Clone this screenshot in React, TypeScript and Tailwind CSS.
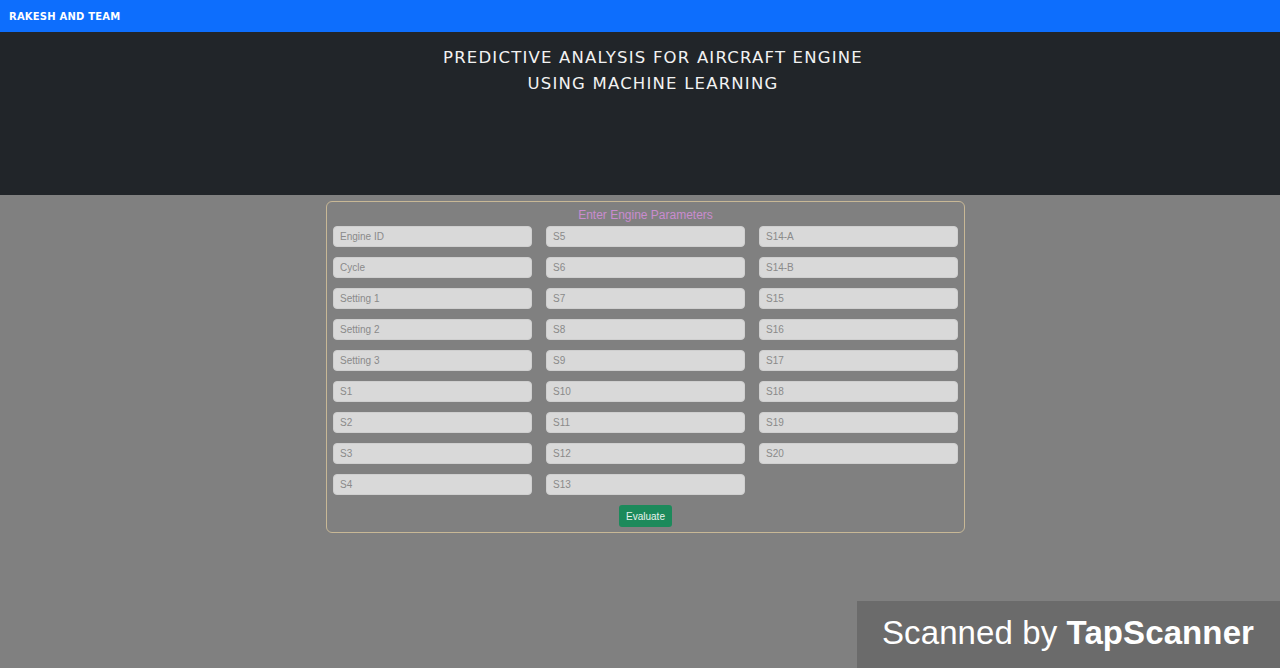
import React from "react";

const col1 = ["Engine ID", "Cycle", "Setting 1", "Setting 2", "Setting 3", "S1", "S2", "S3", "S4"];
const col2 = ["S5", "S6", "S7", "S8", "S9", "S10", "S11", "S12", "S13"];
const col3 = ["S14-A", "S14-B", "S15", "S16", "S17", "S18", "S19", "S20"];

function Field({ label }: { label: string }) {
  return (
    <input
      placeholder={label}
      className="h-[21px] w-full rounded-[4px] bg-[#d9d9d9] px-[6px] text-[10px] text-[#555] placeholder:text-[#8a8a8a] outline-none border border-[#cfcfcf]"
      style={{ fontFamily: '"Liberation Sans", Arial, sans-serif' }}
    />
  );
}

export default function App() {
  return (
    <div className="relative min-h-[668px] w-full bg-[#808080] overflow-hidden" style={{ fontFamily: '"Liberation Sans", Arial, sans-serif' }}>
      <div className="h-[32px] bg-[#0d6efd] flex items-center pl-[9px]">
        <span className="text-white text-[10px] font-bold tracking-[0.2px]" style={{ fontFamily: '"DejaVu Sans", sans-serif' }}>RAKESH AND TEAM</span>
      </div>
      <div className="h-[163px] bg-[#212529] pt-[13px] pl-[26px] text-center">
        <div className="text-[#f2f2f2] text-[16.5px] leading-[26px] tracking-[1.2px]" style={{ fontFamily: '"DejaVu Sans", sans-serif', fontWeight: 400 }}>
          <div>PREDICTIVE ANALYSIS FOR AIRCRAFT ENGINE</div>
          <div>USING MACHINE LEARNING</div>
        </div>
      </div>
      <div className="flex justify-center pt-[6px] pl-[11px]">
        <div className="w-[639px] border border-[#c8b896] rounded-[6px] px-[6px] pt-[5px] pb-[5px] flex flex-col items-center">
          <div className="text-[12px] leading-[16px] text-[#c98ccf] mb-[3px]">Enter Engine Parameters</div>
          <div className="grid grid-cols-3 gap-x-[14px] w-full">
            {[col1, col2, col3].map((col, i) => (
              <div key={i} className="flex flex-col gap-[10px]">
                {col.map((l) => (
                  <Field key={l} label={l} />
                ))}
              </div>
            ))}
          </div>
          <button className="mt-[10px] h-[22px] px-[7px] rounded-[3px] bg-[#1c8a5b] text-[10px] text-[#e8f3ec]">Evaluate</button>
        </div>
      </div>
      <div className="absolute right-0 bottom-0 w-[423px] h-[67px] bg-[#6b6b6b] flex items-center pl-[25px] pb-[4px]">
        <span className="text-white text-[33px] leading-none tracking-[0.1px]" style={{ fontFamily: '"Liberation Sans", Arial, sans-serif' }}>
          Scanned by <span className="font-bold">TapScanner</span>
        </span>
      </div>
    </div>
  );
}
